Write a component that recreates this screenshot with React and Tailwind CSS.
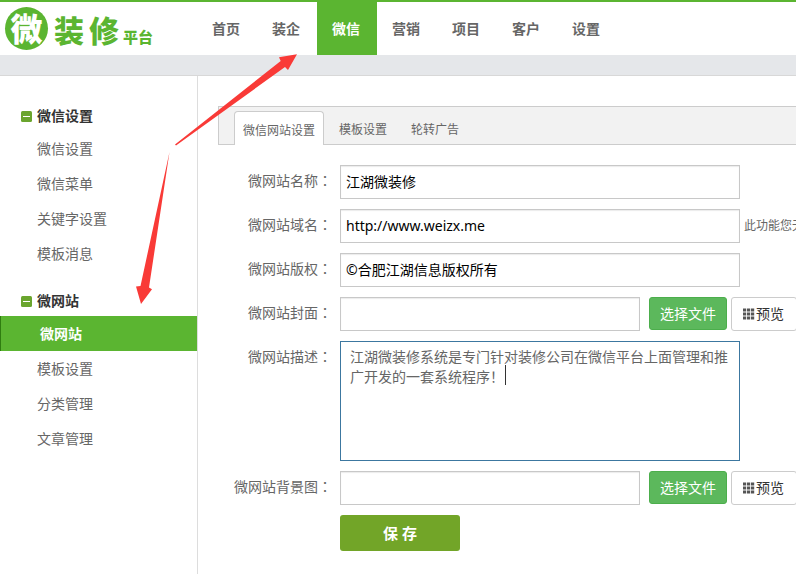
const navItems = ['首页', '装企', '微信', '营销', '项目', '客户', '设置'];

const menus = [
  { title: '微信设置', items: ['微信设置', '微信菜单', '关键字设置', '模板消息'] },
  { title: '微网站', items: ['微网站', '模板设置', '分类管理', '文章管理'], active: '微网站' },
];

const tabs = ['微信网站设置', '模板设置', '轮转广告'];

const description = '江湖微装修系统是专门针对装修公司在微信平台上面管理和推广开发的一套系统程序\uFF01';

const inputClass = 'h-[34px] shrink-0 border border-[#c8c8c8] bg-white px-[5px] pb-[2px] text-sm text-black shadow-[inset_0_1px_1px_rgba(0,0,0,0.08)] outline-none';

function Logo() {
  return (
    <a href="#" className="flex w-[196px] shrink-0 items-center pl-[5px] text-[#5bb531]">
      <span className="flex h-[43px] w-[43px] items-center justify-center rounded-full bg-[#5bb531] text-[32px] leading-none font-black text-white">微</span>
      <span className="ml-[6px] flex items-end pt-1 font-black">
        <span className="flex gap-[5px] text-[30px] leading-9">
          <span>装</span>
          <span>修</span>
        </span>
        <span className="ml-1 text-[15px] leading-6">平台</span>
      </span>
    </a>
  );
}

function Header() {
  return (
    <header className="flex h-[55px] border-t-2 border-[#5bb531] bg-white">
      <Logo />
      <nav className="flex pl-px">
        {navItems.map((item) => (
          <a
            key={item}
            href="#"
            className={`flex items-center pr-[17px] pl-[15px] text-sm font-bold ${item === '微信' ? 'bg-[#5bb531] text-white' : 'text-[#666]'}`}
          >
            {item}
          </a>
        ))}
      </nav>
    </header>
  );
}

function MinusIcon() {
  return (
    <svg className="h-[11px] w-[11px]" viewBox="0 0 11 11">
      <rect width="11" height="11" rx="1.5" fill="#6aa52e" />
      <rect x="2" y="5" width="7" height="1" fill="#fff" />
    </svg>
  );
}

function Sidebar() {
  return (
    <aside className="flex w-[198px] shrink-0 flex-col gap-[15px] border-r border-[#ddd] pt-[25px]">
      {menus.map((menu) => (
        <section key={menu.title}>
          <h2 className="flex h-[30px] items-center gap-[5px] pl-[21px] text-sm font-bold text-[#333]">
            <MinusIcon />
            {menu.title}
          </h2>
          <ul>
            {menu.items.map((item) => (
              <li key={item}>
                <a
                  href="#"
                  className={
                    item === menu.active
                      ? 'flex h-[35px] items-center border-l border-[#2f7d10] bg-[#5bb531] pl-[39px] text-sm font-bold text-white'
                      : 'flex h-[35px] items-center pl-[37px] text-sm text-[#666]'
                  }
                >
                  {item}
                </a>
              </li>
            ))}
          </ul>
        </section>
      ))}
    </aside>
  );
}

function Row({ id, label, children }) {
  return (
    <div className="flex items-start">
      <label htmlFor={id} className="mr-2 w-[114px] shrink-0 text-right text-sm leading-[30px] text-[#666]">
        {label}
        <span className="font-['Noto_Sans_CJK_TC',sans-serif]">{'\uFF1A'}</span>
      </label>
      {children}
    </div>
  );
}

function GridIcon() {
  return (
    <svg className="h-3 w-3" viewBox="0 0 12 12" fill="#555">
      {[0, 4, 8].map((y) => [0, 4, 8].map((x) => (
        <rect key={`${x}-${y}`} x={x} y={y + 0.5} width="3.2" height="3" />
      )))}
    </svg>
  );
}

function FileField({ id }) {
  return (
    <>
      <input id={id} type="text" className={`w-[300px] ${inputClass}`} />
      <button type="button" className="ml-[9px] h-[33px] shrink-0 rounded-[3px] border border-[#4cae4c] bg-[#5cb85c] px-[10px] text-sm text-white">
        选择文件
      </button>
      <button type="button" className="ml-1 flex h-[34px] shrink-0 items-center gap-px rounded-[3px] border border-[#ccc] bg-white pr-3 pl-[11px] text-sm text-[#333]">
        <GridIcon />
        预览
      </button>
    </>
  );
}

function SettingsForm() {
  return (
    <form className="flex flex-col gap-[10px] pt-5">
      <Row id="name" label="微网站名称">
        <input id="name" type="text" defaultValue="江湖微装修" className={`w-[400px] ${inputClass}`} />
      </Row>
      <Row id="domain" label="微网站域名">
        <input id="domain" type="text" defaultValue="http://www.weizx.me" className={`w-[400px] ${inputClass}`} />
        <span className="ml-1 shrink-0 text-xs leading-[34px] text-[#666]">此功能您无</span>
      </Row>
      <Row id="copyright" label="微网站版权">
        <input id="copyright" type="text" defaultValue="©合肥江湖信息版权所有" className={`w-[400px] ${inputClass}`} />
      </Row>
      <Row id="cover" label="微网站封面">
        <FileField id="cover" />
      </Row>
      <Row id="description" label="微网站描述">
        <div className="relative shrink-0">
          <textarea
            id="description"
            defaultValue={description}
            className="block h-[120px] w-[400px] resize-none border border-[#3c77a0] bg-white px-[9px] py-1 font-['Noto_Sans_CJK_SC',sans-serif] text-sm leading-5 text-[#666] outline-none"
          />
          {/* text cursor */}
          <span className="absolute top-6 left-[165px] h-5 w-px bg-[#333]" />
        </div>
      </Row>
      <Row id="background" label="微网站背景图">
        <FileField id="background" />
      </Row>
      <button type="submit" className="ml-[122px] h-9 w-[120px] rounded-[3px] bg-[#72a528] text-[15px] font-bold text-white">
        保 存
      </button>
    </form>
  );
}

function Arrows() {
  return (
    <svg className="pointer-events-none absolute top-0 left-0" width="300" height="310" viewBox="0 0 300 310" fill="#f93a37">
      <path d="M175 144.500L280.700 61L279 57.300L297 54.300L288 70L285 67L176 145.500Z" />
      <path d="M169.500 152L149 287.500L152 289.300L141 304L136 286.500L140.500 286Z" />
    </svg>
  );
}

export default function App() {
  return (
    <div className="relative flex min-h-screen flex-col overflow-hidden bg-white font-['Noto_Sans','Noto_Sans_CJK_SC',sans-serif]">
      <Header />
      <div className="h-[21px] border-b border-[#d8d8d8] bg-[#e5e7ea]" />
      <div className="flex flex-1">
        <Sidebar />
        <main className="min-w-0 flex-1 pt-[30px] pl-5">
          <div className="flex h-[39px] items-end gap-[6px] border border-r-0 border-[#ccc] bg-[#f2f2f2] pl-[15px]">
            {tabs.map((tab, i) => (
              <button
                key={tab}
                type="button"
                className={
                  i === 0
                    ? '-mb-px h-[34px] shrink-0 rounded-t border border-b-0 border-[#ccc] bg-white px-2 pt-1 text-xs text-[#666]'
                    : 'h-[33px] shrink-0 px-[9px] pt-[5px] text-xs text-[#666]'
                }
              >
                {tab}
              </button>
            ))}
          </div>
          <SettingsForm />
        </main>
      </div>
      <Arrows />
    </div>
  );
}
